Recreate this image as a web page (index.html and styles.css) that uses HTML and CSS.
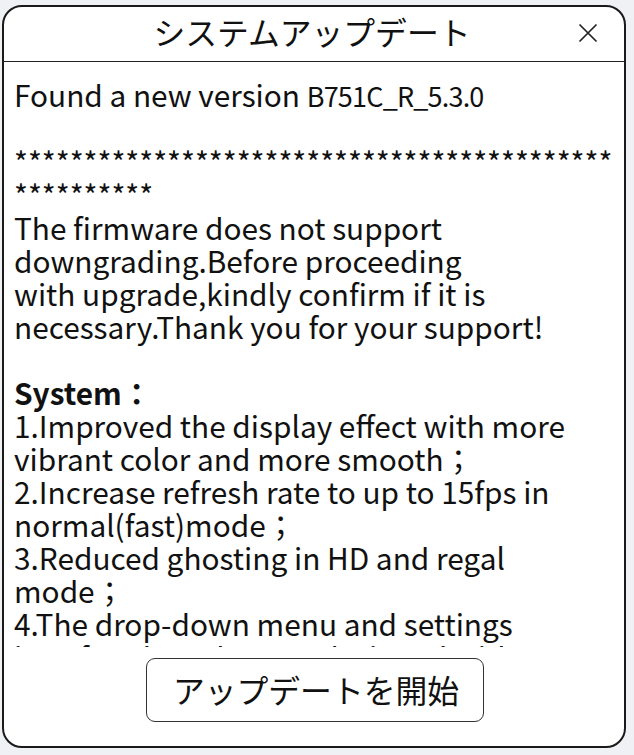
FILE: index.html
```html
<!DOCTYPE html>
<html lang="ja">
<head>
<meta charset="utf-8">
<link rel="stylesheet" href="styles.css">
</head>
<body>
<div class="dialog">
  <div class="header">
    <div class="title">システムアップデート</div>
    <svg class="close" width="20" height="20" viewBox="0 0 20 20"><path d="M1.5 1.5 L18.5 18.5 M18.5 1.5 L1.5 18.5" stroke="#222" stroke-width="1.7" fill="none"/></svg>
  </div>
  <div class="content">
    <div class="text">Found a new version <span class="code">B751C_R_5.3.0</span>

*******************************************
**********
The firmware does not support
downgrading.Before proceeding
with upgrade,kindly confirm if it is
necessary.Thank you for your support!

<b class="bold">System：</b>
1.Improved the display effect with more
vibrant color and more smooth；
2.Increase refresh rate to up to 15fps in
normal(fast)mode；
3.Reduced ghosting in HD and regal
mode；
4.The drop-down menu and settings
interface have been redesigned with a
new look；</div>
  </div>
  <div class="footer">
    <button class="btn">アップデートを開始</button>
  </div>
</div>
</body>
</html>
```
FILE: styles.css
```css
html, body {
  margin: 0;
  padding: 0;
  background: #eff1f4;
}
body {
  width: 634px;
  height: 755px;
  overflow: hidden;
  font-family: "Noto Sans CJK JP", "Noto Sans", sans-serif;
  color: #111;
}
.dialog {
  box-sizing: border-box;
  margin: 5px 0 0 2px;
  width: 624px;
  height: 743px;
  border: 2px solid #1a1a1a;
  border-radius: 20px;
  background: #fff;
  display: flex;
  flex-direction: column;
  overflow: hidden;
}
.header {
  flex: 0 0 auto;
  height: 54px;
  border-bottom: 1.5px solid #222;
  display: flex;
  align-items: center;
  justify-content: center;
  position: relative;
}
.title {
  font-size: 31.8px;
  line-height: 1;
  color: #111;
  margin-top: -4px;
  margin-left: -4px;
}
.close {
  position: absolute;
  right: 26px;
  top: 16px;
}
.content {
  flex: 0 0 auto;
  height: 585px;
  overflow: hidden;
  padding: 16px 10px 0 10px;
  box-sizing: border-box;
}
.text {
  white-space: pre;
  font-size: 29.8px;
  line-height: 33px;
}
.text .code {
  font-size: 27px;
  letter-spacing: -0.8px;
}
.text .bold {
  font-weight: 700;
}
.footer {
  flex: 1 1 auto;
  display: flex;
  justify-content: center;
  padding-top: 11px;
}
.btn {
  box-sizing: border-box;
  width: 338px;
  height: 64px;
  border: 1.5px solid #333;
  border-radius: 9px;
  background: #fff;
  font-family: "Noto Sans CJK JP", sans-serif;
  font-size: 31.8px;
  line-height: 1;
  color: #111;
  padding: 0 0 1px 2px;
  margin-left: 2px;
}
```
